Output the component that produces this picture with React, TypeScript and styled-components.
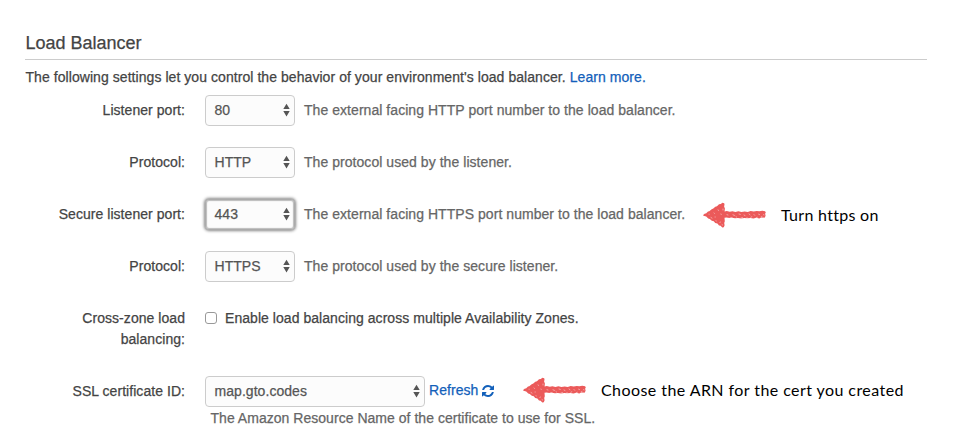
import React from "react";
import styled, { createGlobalStyle } from "styled-components";

const GlobalStyle = createGlobalStyle`
  * { box-sizing: border-box; }
  body {
    margin: 0;
    background: #fff;
    color: #444;
    font: 14px/21px "Liberation Sans", Arial, sans-serif;
    letter-spacing: 0.05px;
  }
`;

const Page = styled.main`
  width: 953px;
  height: 441px;
  padding: 32px 26px 0 25px;
  overflow: hidden;
  white-space: nowrap;
`;

const Heading = styled.h1`
  margin: 0 0 7px;
  height: 28px;
  padding-left: 0.5px;
  border-bottom: 1px solid #ccc;
  font-size: 18px;
  font-weight: 400;
  line-height: 22px;
  letter-spacing: 0;
  -webkit-text-stroke: 0.25px currentColor;
`;

const Intro = styled.p`
  margin: 0 0 7px;
  padding-left: 0.5px;
  letter-spacing: 0.06px;
  -webkit-text-stroke: 0.25px currentColor;
`;

const Link = styled.a`
  color: #1260ba;
  text-decoration: none;
`;

const Form = styled.form`
  display: flex;
  flex-direction: column;
`;

const Row = styled.div<{ $height?: number }>`
  display: flex;
  align-items: flex-start;
  height: ${(p) => p.$height ?? 52}px;
  -webkit-text-stroke: 0.25px currentColor;
`;

const Label = styled.label`
  flex: none;
  width: 160px;
  margin-right: 20px;
  padding-top: 5px;
  text-align: right;
  white-space: normal;
`;

const SelectBox = styled.div<{ $width?: number; $focused?: boolean }>`
  display: flex;
  flex: none;
  align-items: center;
  justify-content: space-between;
  width: ${(p) => p.$width ?? 90}px;
  height: 31px;
  padding: 0 4px 1px 8.5px;
  border: 1px solid ${(p) => (p.$focused ? "#aaa" : "#ccc")};
  border-radius: 4px;
  background: #fcfcfc;
  color: #555;
  box-shadow: ${(p) => (p.$focused ? "0 0 3px 1px #888, inset 0 0 1px 1px #bbb" : "none")};
`;

const Help = styled.span<{ $width?: number }>`
  flex: none;
  width: ${(p) => (p.$width ? `${p.$width}px` : "auto")};
  margin-left: 9px;
  padding-top: 5px;
  color: #666;
`;

const Check = styled.input`
  appearance: none;
  flex: none;
  width: 12px;
  height: 12px;
  margin: 9px 8px 0 0;
  border: 1px solid #999;
  border-radius: 3px;
  background: #fff;
`;

const CheckText = styled.span`
  padding-top: 5px;
`;

const Refresh = styled(Link)`
  display: flex;
  align-items: center;
  gap: 4px;
  width: 94px;
  height: 21px;
  margin: 4px 0 0 4px;
`;

const RefreshIcon = styled.svg`
  flex: none;
  width: 12px;
  height: 12px;
`;

const Note = styled.div<{ $spacing: number; $lineHeight?: number }>`
  display: flex;
  align-items: flex-start;
  height: 31px;
  color: #000;
  font-family: Lato, sans-serif;
  font-size: 16px;
  line-height: ${(p) => p.$lineHeight ?? 31}px;
  letter-spacing: ${(p) => p.$spacing}px;
  -webkit-text-stroke: 0;
`;

const ArrowIcon = styled.svg<{ $top: number }>`
  flex: none;
  width: 66px;
  height: 30px;
  margin: ${(p) => p.$top}px 13px 0 -1px;
`;

const Description = styled.div`
  margin: 1px 0 0 185.5px;
  color: #666;
  letter-spacing: 0.03px;
  -webkit-text-stroke: 0.25px currentColor;
`;

const Stepper = () => (
  <svg width="7" height="14" viewBox="0 0 7 14" fill="#555">
    <path d="M3.5 .8 6.7 6.1H.3zM3.5 13.4 .3 8.1H6.7z" />
  </svg>
);

const Arrow = ({ top = 2 }: { top?: number }) => (
  <ArrowIcon $top={top} viewBox="0 0 66 30">
    <path
      fill="#eb5a5a"
      d="M.8 14.2 3 12.6l1-.2 2-1.8 1.3-.3 2-1.9 2-.8 2-1.8 1.7-.5 2-2 1.8-.4 1.6-1.1 1.8.4.3 1.2-.4 2 .8 2-.3 3.1 2.2-.5 3 .7 2.6-.5 3 .7 3-.6 3 .7 3.3-.4 3 .3 3-.9 3 .4 3-.5 2.6.4 3-.5 2.8.5.7 1.2-.7 1.3.5 1.7-.8 2.2-3.2-.2-2.4.9-3-.6-2.7.7-3.1-.5-3.2.3-3-.4-3 .5-3.2-.4-3 .3-3-.6-2.5.3-3-.6-2 .3.3 3.5-.6 1.7.4 2.3-.8 2-1.6.3-1.5-1.8-1.7-.3-1.6-1.9-2.2-.5-1.4-1.7-2-.5-2-1.9-1.6-.4-2-2-1.8-.4z"
    />
    <path
      fill="none"
      stroke="#fff"
      strokeOpacity=".65"
      strokeWidth=".7"
      strokeLinecap="round"
      d="M7 13.2h.2M9 16.5l1 .6M12 12l.5.4M14 19.6l.2.4M16 9l.7.4M18 21.6l.3-.6M19 13l.2.5M13 16h.3M21 8v1M20 23.6l.6.4M25 13.7l1 .3M28 16.9l2-.2M31 13.8l1.5.6M34 15.6l.6.5M37 13l1.3.4M39 17l1.6-.3M42 14l1 .5M44.5 17h1M47 13l1 .7M48.8 16.3l1-.5M52 13.5l.7.8M54 17l1.4-.7M56.6 13.2l1 .4M59 16l1-.5M61.5 13.7l.6.2M62 17h.4"
    />
  </ArrowIcon>
);

type PortRow = {
  label: string;
  value: string;
  help: string;
  focused?: boolean;
  note?: string;
};

const rows: PortRow[] = [
  { label: "Listener port:", value: "80", help: "The external facing HTTP port number to the load balancer." },
  { label: "Protocol:", value: "HTTP", help: "The protocol used by the listener." },
  {
    label: "Secure listener port:",
    value: "443",
    help: "The external facing HTTPS port number to the load balancer.",
    focused: true,
    note: "Turn https on",
  },
  { label: "Protocol:", value: "HTTPS", help: "The protocol used by the secure listener." },
];

export default function App() {
  return (
    <>
      <GlobalStyle />
      <Page>
        <Heading>Load Balancer</Heading>
        <Intro>
          The following settings let you control the behavior of your environment's load balancer.{" "}
          <Link>Learn more.</Link>
        </Intro>
        <Form>
          {rows.map((row, i) => (
            <Row key={i}>
              <Label>{row.label}</Label>
              <SelectBox $focused={row.focused}>
                {row.value}
                <Stepper />
              </SelectBox>
              <Help $width={row.note ? 399 : undefined}>{row.help}</Help>
              {row.note && (
                <Note $spacing={0.3}>
                  <Arrow />
                  {row.note}
                </Note>
              )}
            </Row>
          ))}
          <Row $height={73}>
            <Label>Cross-zone load balancing:</Label>
            <Check type="checkbox" />
            <CheckText>Enable load balancing across multiple Availability Zones.</CheckText>
          </Row>
          <Row $height={31}>
            <Label>SSL certificate ID:</Label>
            <SelectBox $width={220}>
              map.gto.codes
              <Stepper />
            </SelectBox>
            <Refresh>
              Refresh
              <RefreshIcon viewBox="0 0 1536 1536" fill="currentColor">
                <path d="M1511 928q0 5-1 7-64 268-268 434.500T764 1536q-146 0-282.500-55T238 1324l-129 129q-19 19-45 19t-45-19-19-45V960q0-26 19-45t45-19h448q26 0 45 19t19 45-19 45l-137 137q71 66 161 102t187 36q134 0 250-65t186-179q11-17 53-117 8-23 30-23h192q13 0 22.500 9.500t9.500 22.500zm25-800v448q0 26-19 45t-45 19h-448q-26 0-45-19t-19-45 19-45l138-138Q969 256 768 256q-134 0-250 65T332 500q-11 17-53 117-8 23-30 23H50q-13 0-22.500-9.500T18 608v-7q65-268 270-434.500T768 0q146 0 284 55.500T1297 212l130-129q19-19 45-19t45 19 19 45z" />
              </RefreshIcon>
            </Refresh>
            <Note $spacing={0.43} $lineHeight={28}>
              <Arrow top={0} />
              Choose the ARN for the cert you created
            </Note>
          </Row>
          <Description>The Amazon Resource Name of the certificate to use for SSL.</Description>
        </Form>
      </Page>
    </>
  );
}
